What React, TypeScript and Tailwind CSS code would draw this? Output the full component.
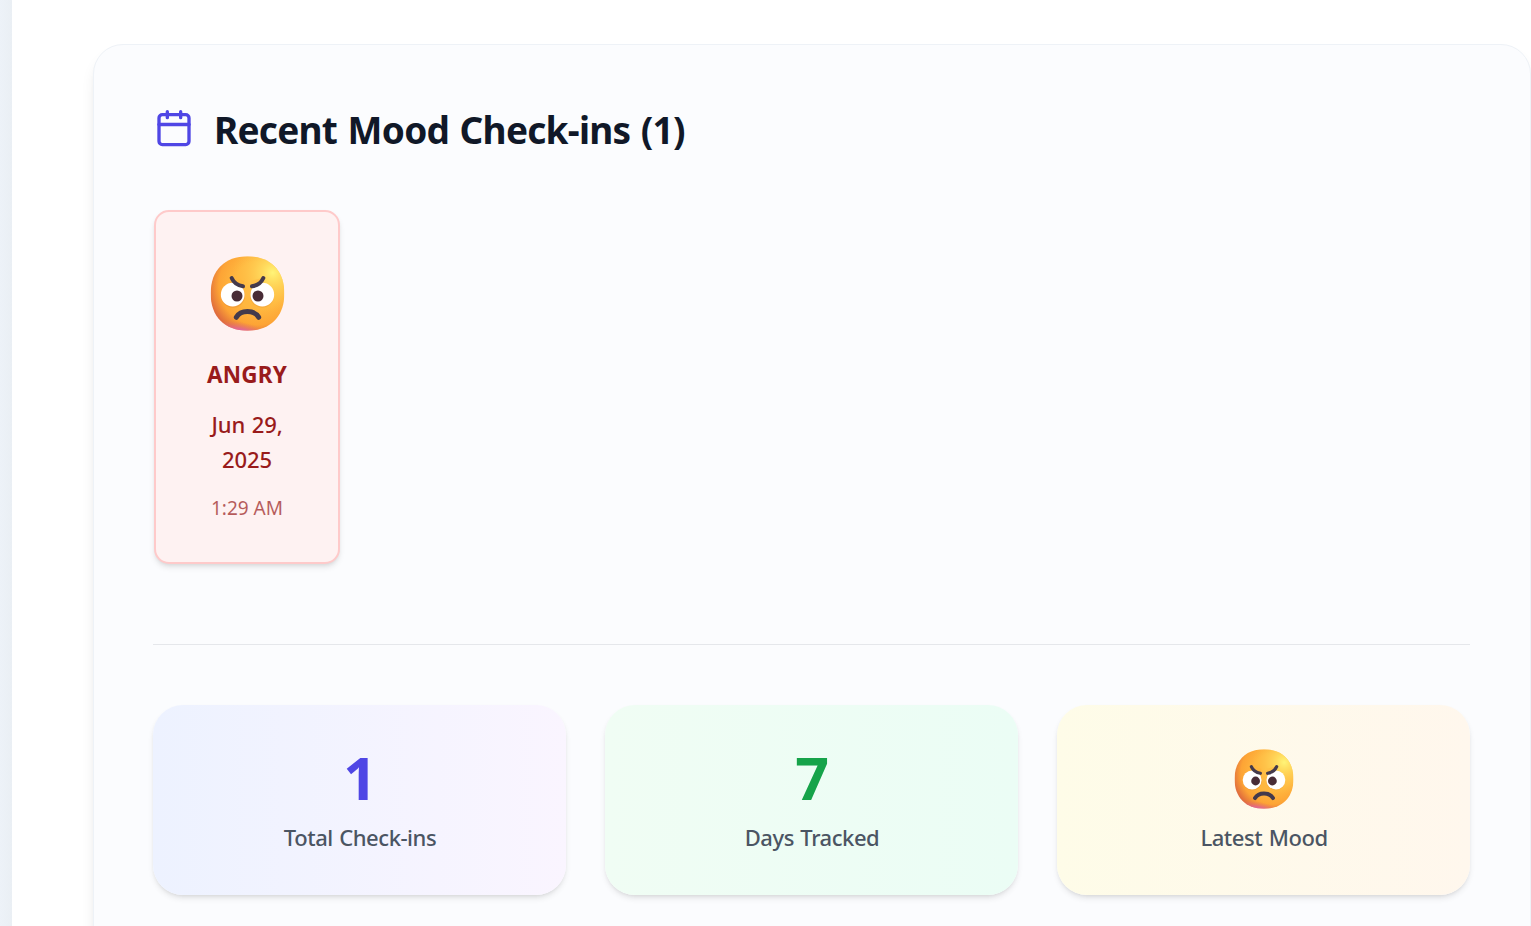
import { clsx } from "clsx";

type CheckIn = {
  id: number;
  mood: string;
  date: string;
  time: string;
};

const checkIns: CheckIn[] = [
  { id: 1, mood: "ANGRY", date: "Jun 29, 2025", time: "1:29 AM" },
];

function CalendarIcon() {
  return (
    <svg
      className="size-10 shrink-0 text-[#4f46e5]"
      viewBox="0 0 24 24"
      fill="none"
      stroke="currentColor"
      strokeWidth="2"
      strokeLinecap="round"
      strokeLinejoin="round"
    >
      <path d="M8 1.6v3.6M16 1.6v3.6" />
      <rect x="3" y="3.4" width="18" height="18" rx="2" />
      <path d="M3 9.3h18" />
    </svg>
  );
}

function AngryFace({ id, className }: { id: string; className: string }) {
  return (
    <svg className={className} viewBox="0 0 225 225">
      <defs>
        <radialGradient
          id={id + "-base"}
          gradientUnits="userSpaceOnUse"
          cx="145"
          cy="88"
          r="160"
        >
          <stop offset="0.45" stopColor="#ffb73f" />
          <stop offset="0.74" stopColor="#fda435" />
          <stop offset="1" stopColor="#d9603f" />
        </radialGradient>
        <radialGradient
          id={id + "-shine"}
          gradientUnits="userSpaceOnUse"
          cx="188"
          cy="50"
          r="120"
        >
          <stop offset="0" stopColor="#fff478" />
          <stop offset="0.25" stopColor="#ffea6a" stopOpacity="0.7" />
          <stop offset="1" stopColor="#ffc148" stopOpacity="0" />
        </radialGradient>
        <radialGradient
          id={id + "-pink"}
          gradientUnits="userSpaceOnUse"
          cx="0"
          cy="0"
          r="1"
          gradientTransform="translate(92 232) rotate(10) scale(100 34)"
        >
          <stop offset="0" stopColor="#e05ec4" />
          <stop offset="0.4" stopColor="#e264a4" stopOpacity="0.75" />
          <stop offset="1" stopColor="#e8735f" stopOpacity="0" />
        </radialGradient>
        <clipPath id={id + "-clip"}>
          <path d="M112.5 1C181 1 223 43 223 112.5S181 224 112.5 224 2 182 2 112.5 44 1 112.5 1Z" />
        </clipPath>
      </defs>
      <g clipPath={`url(#${id}-clip)`}>
        <rect width="225" height="225" fill={`url(#${id}-base)`} />
        <rect width="225" height="225" fill={`url(#${id}-shine)`} />
        <rect width="225" height="225" fill={`url(#${id}-pink)`} />
      </g>
      <circle cx="69" cy="119" r="36" fill="#d4762f" opacity="0.3" />
      <circle cx="156" cy="119" r="36" fill="#d4762f" opacity="0.2" />
      <circle cx="68" cy="116" r="35.5" fill="#fff" />
      <circle cx="157" cy="116" r="35.5" fill="#fff" />
      <circle cx="81" cy="120" r="16.5" fill="#482c36" />
      <circle cx="144" cy="120" r="16.5" fill="#482c36" />
      {/* lids cut the top of the eyes under the brows */}
      <path d="M66 65Q74 87 100 90L103 74Z" fill="#ffb73f" />
      <path d="M160 65Q152 87 126 90L123 74Z" fill="#ffc148" />
      <g fill="none" stroke="#443a4c" strokeLinecap="round">
        <path d="M65 66Q74 87 99 91" strokeWidth="12" />
        <path d="M160 66Q151 87 126 91" strokeWidth="12" />
        <path d="M79 184C92 161 133 161 146 184" strokeWidth="15" />
      </g>
    </svg>
  );
}

function MoodCard({ checkIn }: { checkIn: CheckIn }) {
  return (
    <div className="flex flex-col items-center w-[186px] h-[354px] pt-11 px-9 bg-[#fef2f2] border-2 border-[#fecaca] rounded-[15px] shadow-md text-center text-[#991b1b]">
      <AngryFace id={"mood-" + checkIn.id} className="size-[75px]" />
      <p className="mt-[26px] text-[22.5px] leading-[35px] font-bold tracking-[0.2px]">
        {checkIn.mood}
      </p>
      <p className="mt-[15px] text-[22px] leading-[35px] font-medium tracking-[-0.1px] [word-spacing:1px]">
        {checkIn.date}
      </p>
      <p className="mt-4 text-[19px] leading-[30px] opacity-70 whitespace-nowrap">
        {checkIn.time}
      </p>
    </div>
  );
}

const stats = [
  {
    label: "Total Check-ins",
    value: "1",
    card: "from-[#edf2ff] to-[#faf5ff]",
    color: "text-[#4f46e5]",
  },
  {
    label: "Days Tracked",
    value: "7",
    card: "from-[#f0fdf4] to-[#ebfdf5]",
    color: "text-[#16a34a]",
  },
  {
    label: "Latest Mood",
    value: null,
    card: "from-[#fefce8] to-[#fff7ed]",
    color: "",
  },
];

export default function App() {
  return (
    <div className="flex w-full h-screen overflow-hidden bg-white font-['Noto_Sans','Open_Sans',sans-serif]">
      <div className="w-3 shrink-0 bg-gradient-to-r from-[#edf2f8] to-[#eaeff4]" />
      <main className="grow pt-11 pl-[81px]">
        <section className="h-[960px] pl-[59px] pr-[60px] pt-[59px] bg-[#fbfcfe] border border-[#eef2f7] rounded-[30px] shadow-[0_10px_15px_-3px_rgba(0,0,0,0.1),0_4px_6px_-4px_rgba(0,0,0,0.1)]">
          <div className="flex items-center gap-5 h-[50px] pl-px">
            <CalendarIcon />
            <h2 className="pt-px text-[37px] leading-[50px] font-bold text-gray-900 whitespace-nowrap tracking-[-0.75px] [word-spacing:1.6px]">
              Recent Mood Check-ins ({checkIns.length})
            </h2>
          </div>

          <div className="flex gap-10 mt-14 pl-px">
            {checkIns.map((c) => (
              <MoodCard key={c.id} checkIn={c} />
            ))}
          </div>

          <div className="grid grid-cols-3 gap-[39px] mt-20 pt-[60px] border-t border-[#e5e7eb]">
            {stats.map((s) => (
              <div
                key={s.label}
                className={clsx(
                  "flex flex-col items-center h-[190px] pl-px rounded-[30px] bg-gradient-to-r shadow-md",
                  s.value ? "pt-[42px]" : "pt-11",
                  s.card
                )}
              >
                {s.value ? (
                  <p
                    className={clsx(
                      "text-[59px] leading-[60px] font-bold",
                      s.color
                    )}
                  >
                    {s.value}
                  </p>
                ) : (
                  <AngryFace id="latest" className="size-[60px]" />
                )}
                <p
                  className={clsx(
                    "text-[22px] leading-[35px] font-medium text-[#4b5563] tracking-[-0.45px] [word-spacing:1.2px]",
                    s.value ? "mt-[13px]" : "mt-[11px]"
                  )}
                >
                  {s.label}
                </p>
              </div>
            ))}
          </div>
        </section>
      </main>
    </div>
  );
}
